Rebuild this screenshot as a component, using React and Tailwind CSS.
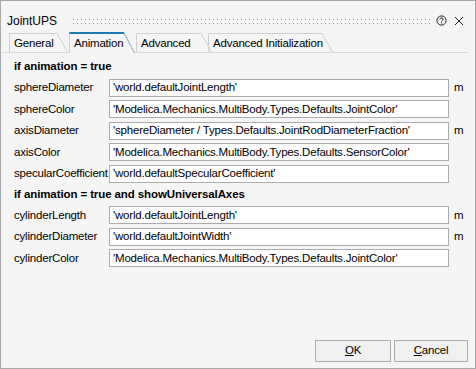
import React from "react";

const FONT = "font-['Liberation_Sans',Arial,sans-serif]";

const sections = [
  {
    title: "if animation = true",
    rows: [
      { label: "sphereDiameter", value: "'world.defaultJointLength'", unit: "m" },
      { label: "sphereColor", value: "'Modelica.Mechanics.MultiBody.Types.Defaults.JointColor'" },
      { label: "axisDiameter", value: "'sphereDiameter / Types.Defaults.JointRodDiameterFraction'", unit: "m" },
      { label: "axisColor", value: "'Modelica.Mechanics.MultiBody.Types.Defaults.SensorColor'" },
      { label: "specularCoefficient", value: "'world.defaultSpecularCoefficient'" },
    ],
  },
  {
    title: "if animation = true and showUniversalAxes",
    rows: [
      { label: "cylinderLength", value: "'world.defaultJointLength'", unit: "m" },
      { label: "cylinderDiameter", value: "'world.defaultJointWidth'", unit: "m" },
      { label: "cylinderColor", value: "'Modelica.Mechanics.MultiBody.Types.Defaults.JointColor'" },
    ],
  },
];

const tabs = [
  { name: "General", w: 48, ml: "ml-0" },
  { name: "Animation", w: 55, ml: "ml-[1px]", active: true },
  { name: "Advanced", w: 65, ml: "ml-[1px]" },
  { name: "Advanced Initialization", w: 114, ml: "-ml-[4px]" },
];

// tab with slanted right edge
function Tab({ name, w, active }) {
  const h = active ? 21 : 19;
  return (
    <div className={`flex items-end ${active ? "relative z-10 -mb-px" : ""}`}>
      <div
        className={`flex items-center pl-[4px] border-l border-[#cfcfcf] whitespace-nowrap ${
          active ? "h-[21px] border-t-2 border-t-[#1a7cb4] bg-[#f5f5f5] pt-[1px]" : "h-[19px] border-t pt-[2px]"
        }`}
        style={{ width: w }}
      >
        <span className="leading-none">{name}</span>
      </div>
      <svg width="11" height={h}>
        {active && <polygon points={`0,0 1,0 11,${h} 0,${h}`} fill="#f5f5f5" />}
        <line x1="0" y1={active ? 1 : 0.5} x2="10.5" y2={h} stroke={active ? "#1a7cb4" : "#cfcfcf"} strokeWidth="1" />
        {active && <line x1="0" y1="1.5" x2="10.5" y2={h} stroke="#cfcfcf" strokeWidth="1" />}
      </svg>
    </div>
  );
}

function Grip() {
  return (
    <svg className="flex-1 h-[7px]">
      <defs>
        <pattern id="dots" width="4" height="4" patternUnits="userSpaceOnUse">
          <rect x="0" y="0" width="1" height="1" fill="#9a9a9a" />
        </pattern>
      </defs>
      <rect x="0" y="0" width="100%" height="5" fill="url(#dots)" />
    </svg>
  );
}

export default function App() {
  return (
    <div className={`w-[476px] h-[369px] bg-[#f5f5f5] border border-[#a9a9a9] flex flex-col text-[11.5px] tracking-[-0.2px] text-black ${FONT}`}>
      {/* title bar */}
      <div className="h-[30px] flex items-center pl-[6px] pr-[11px] pt-[9px]">
        <span className="text-[12px] tracking-normal leading-none">JointUPS</span>
        <div className="flex-1 flex items-center ml-[16px] mr-[6px] pt-[3px]">
          <Grip />
        </div>
        <svg width="11" height="11" viewBox="0 0 11 11" className="mr-[7px]">
          <circle cx="5.5" cy="5.5" r="4.6" fill="none" stroke="#222" strokeWidth="1" />
          <path d="M3.9 4.3 Q3.9 2.9 5.5 2.9 Q7.1 2.9 7.1 4.2 Q7.1 5 6 5.5 Q5.5 5.8 5.5 6.5" fill="none" stroke="#222" strokeWidth="1" />
          <rect x="5" y="7.4" width="1" height="1" fill="#222" />
        </svg>
        <svg width="10" height="10" viewBox="0 0 10 10">
          <path d="M1 1 L9 9 M9 1 L1 9" stroke="#222" strokeWidth="1" />
        </svg>
      </div>

      {/* tabs */}
      <div className="flex items-end pl-[8px] mr-[7px] border-b border-[#dadada] h-[22px]">
        {tabs.map((t) => (
          <div key={t.name} className={t.ml}>
            <Tab {...t} />
          </div>
        ))}
      </div>

      {/* content */}
      <div className="flex flex-col pl-[13px] pt-[4px]">
        {sections.map((s) => (
          <div key={s.title} className="flex flex-col">
            <div className="h-[20px] flex items-center font-bold tracking-[-0.1px]">{s.title}</div>
            {s.rows.map((r) => (
              <div key={r.label} className="h-[21.5px] flex items-center">
                <div className="w-[95px] whitespace-nowrap">{r.label}</div>
                <div className="w-[340px] h-[18px] bg-white border border-[#ababab] flex items-center pl-[3px] whitespace-nowrap overflow-hidden">
                  {r.value}
                </div>
                {r.unit && <span className="ml-[5px]">{r.unit}</span>}
              </div>
            ))}
          </div>
        ))}
      </div>

      {/* buttons */}
      <div className="mt-auto flex justify-end gap-[3px] pr-[7px] pb-[6px]">
        <button className="w-[76px] h-[22px] bg-[#f0f0f0] border border-[#adadad] flex items-center justify-center">
          <span><span className="underline">O</span>K</span>
        </button>
        <button className="w-[74px] h-[22px] bg-[#f0f0f0] border border-[#adadad] flex items-center justify-center">
          <span><span className="underline">C</span>ancel</span>
        </button>
      </div>
    </div>
  );
}
